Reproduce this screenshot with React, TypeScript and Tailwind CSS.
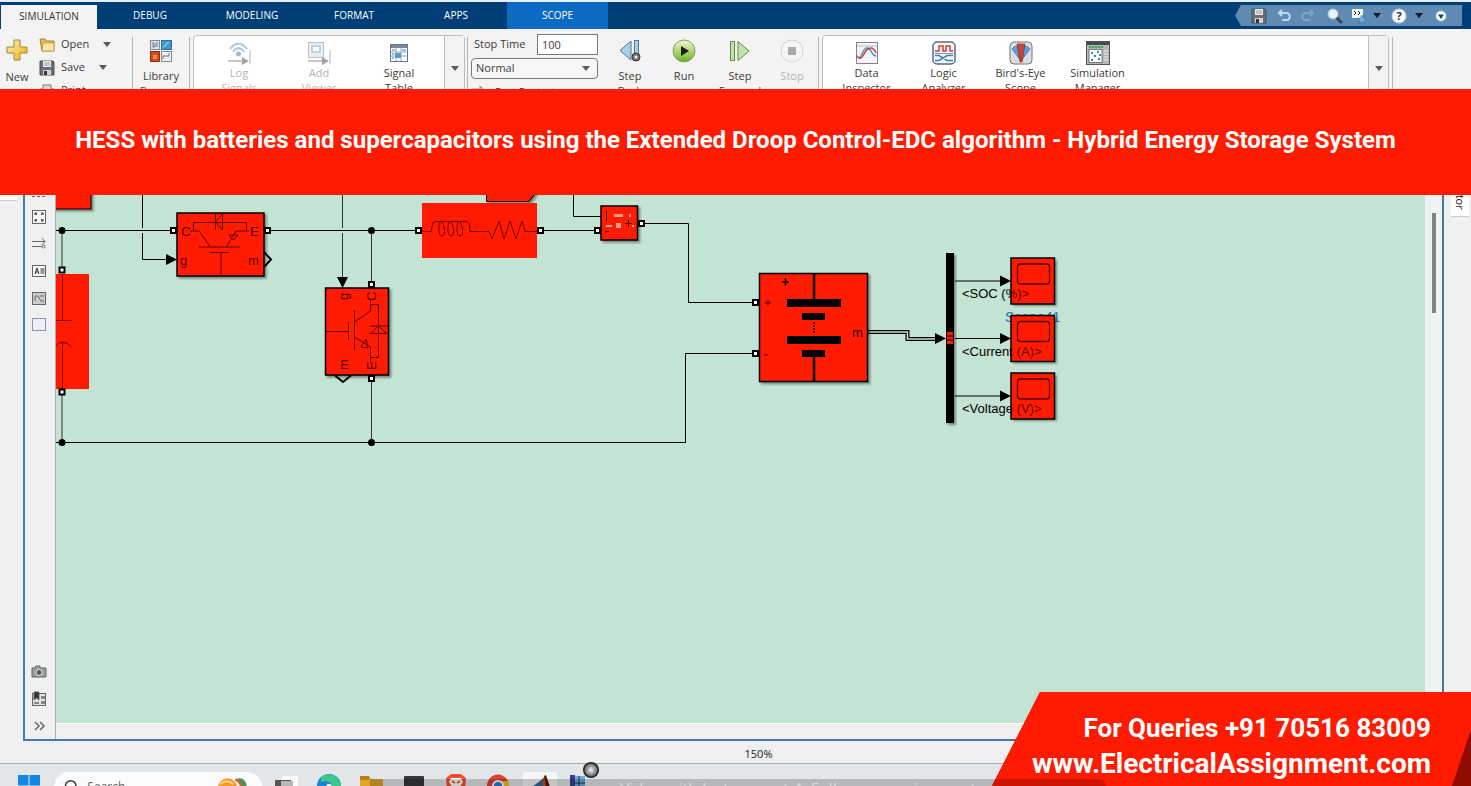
import type { ReactNode } from "react";

const RED = "#ff1a00";
const CANVAS = "#c3e3d3";

const tabs = ["SIMULATION", "DEBUG", "MODELING", "FORMAT", "APPS", "SCOPE"];

function Caret({ className = "" }: { className?: string }) {
  return (
    <svg width="8" height="5" viewBox="0 0 8 5" className={className}>
      <path d="M0 0h8L4 5z" fill="currentColor" />
    </svg>
  );
}

function Disk({ size = 16 }: { size?: number }) {
  return (
    <svg width={size} height={size} viewBox="0 0 16 16">
      <path d="M1 1h13l1 1v13H1z" fill="#6b6e72" stroke="#4a4d51" />
      <rect x="4" y="1" width="8" height="6" fill="#e8eaec" />
      <path d="M5 3h6M5 5h6" stroke="#9aa0a6" />
      <rect x="4" y="10" width="8" height="5" fill="#cfd2d6" />
      <rect x="5" y="11" width="3" height="4" fill="#33363a" />
    </svg>
  );
}

function PlusIcon() {
  return (
    <svg width="22" height="22" viewBox="0 0 22 22">
      <defs>
        <linearGradient id="gold" x1="0" y1="0" x2="1" y2="1">
          <stop offset="0" stopColor="#fff6b0" />
          <stop offset="1" stopColor="#e6ab1c" />
        </linearGradient>
      </defs>
      <path d="M8 1h6v7h7v6h-7v7H8v-7H1V8h7z" fill="url(#gold)" stroke="#a8862c" />
    </svg>
  );
}

function FolderIcon() {
  return (
    <svg width="16" height="14" viewBox="0 0 16 14">
      <path d="M1 1h5l1 2h8v10H3z" fill="#e2b862" stroke="#a98236" />
      <path d="M4 5h11v8H3z" fill="#fbe6a6" stroke="#b8924a" strokeWidth=".7" />
    </svg>
  );
}

function LibraryIcon() {
  return (
    <svg width="22" height="22" viewBox="0 0 22 22">
      <rect x=".5" y=".5" width="9" height="9" fill="#dfe3e8" stroke="#868c94" />
      <path d="M3 2v5h2V3m2-1v5" stroke="#6d757f" fill="none" />
      <rect x="11.500" y=".5" width="10" height="9" fill="#3d97d3" stroke="#2b6fa3" />
      <path d="M13 7c3 0 3-5 6-5" stroke="#bfe3f7" fill="none" />
      <rect x=".5" y="11.500" width="9" height="10" fill="#d4481c" stroke="#92310f" />
      <rect x="3" y="15" width="4" height="4" fill="#f08a5c" />
      <rect x="11.500" y="11.500" width="10" height="10" fill="#eceef0" stroke="#868c94" />
      <path d="M13 19v-3h6v-3" stroke="#6d757f" fill="none" />
    </svg>
  );
}

function LogIcon() {
  return (
    <svg width="24" height="24" viewBox="0 0 24 24" fill="none">
      <path d="M3 8c5-7 12-7 17 0M6 11c3-5 8-5 11 0" stroke="#a9cbe0" strokeWidth="2" />
      <circle cx="11.500" cy="13" r="2.500" fill="#9db9cb" />
      <path d="M1 20h16" stroke="#b5b5b5" strokeWidth="1.500" />
      <path d="M15 16l7 4-7 4z" fill="#a3a3a3" />
      <path d="M23 9v14" stroke="#b5b5b5" />
    </svg>
  );
}

function ViewerIcon() {
  return (
    <svg width="24" height="24" viewBox="0 0 24 24" fill="none">
      <rect x="1.500" y="1.500" width="15" height="15" fill="#e9eff3" stroke="#b7c2ca" />
      <rect x="5" y="5" width="8" height="6" fill="#fff" stroke="#a9cbe0" strokeWidth="1.500" />
      <path d="M1 20h16" stroke="#b5b5b5" strokeWidth="1.500" />
      <path d="M15 16l7 4-7 4z" fill="#a3a3a3" />
      <path d="M23 9v14" stroke="#b5b5b5" />
    </svg>
  );
}

function TableIcon() {
  return (
    <svg width="18" height="18" viewBox="0 0 18 18">
      <rect x=".5" y=".5" width="17" height="17" fill="#fff" stroke="#6b7480" />
      <rect x="1" y="1" width="16" height="3" fill="#7d8894" />
      <path d="M1 8h16M1 12h16M6 4v13M11 4v13" stroke="#9aa5b1" />
      <rect x="5" y="9" width="6" height="5" fill="#4f9be0" />
      <path d="M2 6h3M2 10h2M2 14h2M12 6h4" stroke="#3e7fc0" />
    </svg>
  );
}

function StepBackIcon() {
  return (
    <svg width="24" height="24" viewBox="0 0 24 24">
      <path d="M13 2v19L2 11.500z" fill="#a9d0ea" stroke="#4f7896" />
      <rect x="16.500" y="1.500" width="4" height="20" fill="#a9d0ea" stroke="#4f7896" />
      <circle cx="18" cy="18" r="4" fill="#777" stroke="#333" />
      <circle cx="18" cy="18" r="1.500" fill="#eee" />
    </svg>
  );
}

function RunIcon() {
  return (
    <svg width="24" height="24" viewBox="0 0 24 24">
      <defs>
        <linearGradient id="run" x1="0" y1="0" x2="0" y2="1">
          <stop offset="0" stopColor="#f0f8d4" />
          <stop offset="1" stopColor="#6fb01c" />
        </linearGradient>
      </defs>
      <circle cx="12" cy="12" r="11" fill="url(#run)" stroke="#86a35a" />
      <path d="M9 7l8 5-8 5z" fill="#1d1d1d" />
    </svg>
  );
}

function StepForwardIcon() {
  return (
    <svg width="22" height="24" viewBox="0 0 22 24">
      <rect x="1.500" y="2.500" width="4" height="19" fill="#bfe3a8" stroke="#5d8f4a" />
      <path d="M9 2.500v19L20 12z" fill="#bfe3a8" stroke="#5d8f4a" />
    </svg>
  );
}

function StopIcon() {
  return (
    <svg width="24" height="24" viewBox="0 0 24 24">
      <circle cx="12" cy="12" r="11" fill="#f4f4f4" stroke="#d3d3d3" />
      <rect x="8" y="8" width="8" height="8" fill="#a9a9a9" />
    </svg>
  );
}

function DataIcon() {
  return (
    <svg width="22" height="22" viewBox="0 0 22 22" fill="none">
      <rect x=".5" y=".5" width="21" height="21" fill="#f5f5f5" stroke="#7f858b" />
      <path d="M1 4h20" stroke="#b9bec3" />
      <path d="M2 16c5 0 4-10 9-10s4 8 9 8" stroke="#4d93cf" strokeWidth="1.500" />
      <path d="M1 14c3 4 5 2 7-2s4-6 7-6 4 3 5 5" stroke="#c3443b" strokeWidth="1.500" />
    </svg>
  );
}

function LogicIcon() {
  return (
    <svg width="24" height="24" viewBox="0 0 24 24" fill="none">
      <rect x="1" y="1" width="22" height="22" rx="4" fill="#f3f5f7" stroke="#5c6b86" strokeWidth="1.500" />
      <path d="M3 10h4V5h4v5h3V5h4v5h3" stroke="#c3443b" strokeWidth="1.500" />
      <path d="M3 12.500h18" stroke="#8494aa" />
      <path d="M3 14.500h4l8 5h6M3 19.500h4l8-5h6" stroke="#3c7fc0" strokeWidth="1.500" />
    </svg>
  );
}

function BirdIcon() {
  return (
    <svg width="24" height="24" viewBox="0 0 24 24">
      <rect x="1" y="1" width="22" height="22" rx="4" fill="#dcdfe2" stroke="#70767c" />
      <path d="M3 8c2-3 4-3 6-3l3 15zM21 8c-2-3-4-3-6-3l-3 15z" fill="#5aa2dc" stroke="#3c70a0" strokeWidth=".7" />
      <path d="M8 3h8l-3 18h-2z" fill="#c7453a" stroke="#8e2b22" strokeWidth=".7" />
    </svg>
  );
}

function ManagerIcon() {
  return (
    <svg width="24" height="24" viewBox="0 0 24 24">
      <rect x=".5" y=".5" width="23" height="23" fill="#b4b8bb" stroke="#555" />
      <rect x="1" y="1" width="22" height="3" fill="#444a50" />
      <path d="M3 6h14" stroke="#2fa04a" strokeWidth="2" strokeDasharray="2 1" />
      <rect x="3" y="8.500" width="13" height="13" fill="#fff" stroke="#777" />
      <path d="M5 11h2v2H5zM11 10h2v2h-2zM8 14h2v2H8zM12 17h2v2h-2zM5 18h2v2H5zM13 13h2v2h-2z" fill="#3183cf" />
      <path d="M18 10h4M18 13h4M18 16h4M18 19h4" stroke="#f0f0f0" />
    </svg>
  );
}

function ToolButton({
  icon,
  lines,
  width,
  gap = "gap-0",
  disabled = false,
}: {
  icon: ReactNode;
  lines: string[];
  width: string;
  gap?: string;
  disabled?: boolean;
}) {
  return (
    <button
      disabled={disabled}
      className={`flex shrink-0 flex-col items-center text-[11px] leading-[15px] ${width} ${gap} ${
        disabled ? "text-[#b4b4b4]" : "text-[#3c3c3c]"
      }`}
    >
      <span className="flex h-6 items-center">{icon}</span>
      <span className="flex flex-col">
        {lines.map((line) => (
          <span key={line}>{line}</span>
        ))}
      </span>
    </button>
  );
}

function Divider() {
  return <div className="mt-2 w-px shrink-0 bg-[#b5b7b9]" />;
}

function QuickAccess() {
  return (
    <div className="mt-[3px] mr-[9px] ml-auto flex h-[21px] w-[227px] items-center bg-[#5f8ab2] pl-4 text-[#0c1c30] [clip-path:polygon(6px_0,100%_0,100%_100%,6px_100%,0_50%)]">
      <button aria-label="Save" className="w-[26px]">
        <Disk />
      </button>
      <button aria-label="Undo" className="w-6">
        <svg width="14" height="14" viewBox="0 0 14 14" fill="none" stroke="#b9dcf3" strokeWidth="2">
          <path d="M5 1L2 4l3 3M2 4h7c5 0 5 7 0 7H5" />
        </svg>
      </button>
      <button aria-label="Redo" className="w-[26px]">
        <svg width="14" height="14" viewBox="0 0 14 14" fill="none" stroke="#7ba6c9" strokeWidth="2">
          <path d="M9 1l3 3-3 3M12 4H5c-5 0-5 7 0 7h4" />
        </svg>
      </button>
      <button aria-label="Find" className="w-6">
        <svg width="16" height="16" viewBox="0 0 16 16">
          <path d="M9 9l6 6" stroke="#33475c" strokeWidth="3" />
          <circle cx="6" cy="6" r="5" fill="#e9f4fb" stroke="#a8c5da" />
        </svg>
      </button>
      <button aria-label="Favorites" className="flex w-10 items-center gap-1.5">
        <svg width="16" height="16" viewBox="0 0 16 16">
          <rect x="1" y="1" width="11" height="9" fill="#f2f2f2" />
          <path d="M3 3l2 2-2 2M7 3l2 2-2 2" fill="none" stroke="#222" />
          <path d="M11 7l1.500 3 3 .4-2 2 .5 3-3-1.400-3 1.400.6-3-2-2 3-.4z" fill="#6fb0e0" stroke="#2c6a9c" strokeWidth=".6" />
        </svg>
        <Caret />
      </button>
      <button aria-label="Help" className="flex w-11 items-center gap-2">
        <svg width="16" height="16" viewBox="0 0 16 16">
          <circle cx="8" cy="8" r="7" fill="#f4f6f8" stroke="#c5d3df" />
          <text x="8" y="12" textAnchor="middle" fontSize="11" fontWeight="700" fill="#27323d">?</text>
        </svg>
        <Caret />
      </button>
      <button aria-label="Minimize toolstrip">
        <svg width="12" height="12" viewBox="0 0 12 12">
          <circle cx="6" cy="6" r="5" fill="#fff" stroke="#a7d2ee" />
          <path d="M3 4.500h6L6 9z" fill="#123f6b" />
        </svg>
      </button>
    </div>
  );
}

function Toolstrip() {
  return (
    <div className="flex h-[91px] shrink-0 overflow-hidden bg-[#f3f3f3]">
      <div className="flex w-[132px] shrink-0 text-[11px] text-[#3c3c3c]">
        <button className="mt-2.5 flex w-[34px] flex-col items-center leading-[15px]">
          <span className="flex h-[30px] items-start">
            <PlusIcon />
          </span>
          New
        </button>
        <div className="mt-1 ml-[5px] flex flex-col">
          <button className="flex h-[23px] items-center gap-1.5">
            <FolderIcon /> Open <Caret className="ml-2 text-[#5a5a5a]" />
          </button>
          <button className="flex h-[23px] items-center gap-1.5">
            <Disk /> Save <Caret className="ml-2 text-[#5a5a5a]" />
          </button>
          <button className="flex h-[23px] items-center gap-1.5">
            <svg width="16" height="14" viewBox="0 0 16 14">
              <path d="M4 1h8v4h3v6H1V5h3z" fill="#d9d9d9" stroke="#777" />
            </svg>
            Print
          </button>
        </div>
      </div>
      <Divider />
      <div className="mt-2.5 flex shrink-0">
        <ToolButton width="w-14" gap="gap-[5px]" icon={<LibraryIcon />} lines={["Library", "Browser"]} />
      </div>
      <Divider />
      <div className="mt-1.5 ml-[3px] flex w-[272px] shrink-0 rounded-t border border-[#bcbec0] bg-white">
        <div className="flex flex-1 pt-[5px] pl-[5px]">
          <ToolButton width="w-20" disabled icon={<LogIcon />} lines={["Log", "Signals"]} />
          <ToolButton width="w-20" disabled icon={<ViewerIcon />} lines={["Add", "Viewer"]} />
          <ToolButton width="w-20" icon={<TableIcon />} lines={["Signal", "Table"]} />
        </div>
        <button aria-label="More prepare tools" className="flex w-5 justify-center border-l border-[#bcbec0] bg-[#f3f3f3] pt-[30px] text-[#5a5a5a]">
          <Caret />
        </button>
      </div>
      <div className="ml-0.5 flex">
        <Divider />
      </div>
      <div className="mt-[5px] ml-[3px] w-[127px] shrink-0 text-[11px] text-[#3c3c3c]">
        <div className="flex items-center justify-between">
          <label htmlFor="stop-time" className="ml-[3px]">Stop Time</label>
          <input id="stop-time" defaultValue="100" className="h-[21px] w-[61px] border border-[#77797b] bg-white px-1" />
        </div>
        <div className="relative mt-[3px]">
          <select aria-label="Simulation mode" className="h-[21px] w-full appearance-none rounded border border-[#77797b] bg-[#f7f7f7] px-1">
            <option>Normal</option>
          </select>
          <Caret className="pointer-events-none absolute top-2 right-2 text-[#5a5a5a]" />
        </div>
        <button className="mt-1 flex items-center gap-2 leading-[17px]">
          <svg width="16" height="12" viewBox="0 0 16 12">
            <path d="M1 3h8V0l6 6-6 6V9H1z" fill="#c9c9e0" stroke="#8885a5" />
          </svg>
          Fast Restart
        </button>
      </div>
      <div className="mt-2.5 ml-1 flex w-[216px] shrink-0 gap-1">
        <ToolButton width="w-[56px]" gap="gap-[5px]" icon={<StepBackIcon />} lines={["Step", "Back"]} />
        <ToolButton width="w-[44px]" gap="gap-[5px]" icon={<RunIcon />} lines={["Run"]} />
        <ToolButton width="w-[60px]" gap="gap-[5px]" icon={<StepForwardIcon />} lines={["Step", "Forward"]} />
        <ToolButton width="w-[36px]" gap="gap-[5px]" disabled icon={<StopIcon />} lines={["Stop"]} />
      </div>
      <Divider />
      <div className="mt-1.5 mr-[3px] ml-[3px] flex w-[567px] shrink-0 rounded-t border border-[#bcbec0] bg-white">
        <div className="flex flex-1 pt-[5px] pl-[5px]">
          <ToolButton width="w-[77px]" icon={<DataIcon />} lines={["Data", "Inspector"]} />
          <ToolButton width="w-[77px]" icon={<LogicIcon />} lines={["Logic", "Analyzer"]} />
          <ToolButton width="w-[77px]" icon={<BirdIcon />} lines={["Bird's-Eye", "Scope"]} />
          <ToolButton width="w-[77px]" icon={<ManagerIcon />} lines={["Simulation", "Manager"]} />
        </div>
        <button aria-label="More review tools" className="flex w-5 justify-center border-l border-[#bcbec0] bg-[#f3f3f3] pt-[30px] text-[#5a5a5a]">
          <Caret />
        </button>
      </div>
      <Divider />
    </div>
  );
}

function PaletteButton({ label, children }: { label: string; children: ReactNode }) {
  return (
    <button aria-label={label} className="size-4 shrink-0">
      <svg width="16" height="16" viewBox="0 0 16 16" fill="none" stroke="#666">
        {children}
      </svg>
    </button>
  );
}

function Palette() {
  return (
    <div className="flex w-[31px] shrink-0 flex-col items-center gap-[11px] border-r border-[#a9adb0] bg-[#eef0f1] pt-1.5 pr-0.5 pb-[5px]">
      <PaletteButton label="Hide browser">
        <rect x="1.500" y="2.500" width="13" height="11" />
      </PaletteButton>
      <PaletteButton label="Back">
        <path d="M14 8H3M7 4L3 8l4 4" />
      </PaletteButton>
      <PaletteButton label="Zoom">
        <path d="M1 14.500h14" strokeDasharray="3 2" />
      </PaletteButton>
      <PaletteButton label="Fit to view">
        <rect x="1.500" y="1.500" width="13" height="13" fill="#f7f7f7" />
        <path d="M4 6V4h2M10 4h2v2M12 10v2h-2M6 12H4v-2M4 4l2 2M12 4l-2 2M12 12l-2-2M4 12l2-2" stroke="#333" />
      </PaletteButton>
      <PaletteButton label="Port values">
        <path d="M1 5.500h13M11 2.500l3 3-3 3M1 10.500h10" />
        <circle cx="12.500" cy="10.500" r="1.500" />
      </PaletteButton>
      <PaletteButton label="Annotation">
        <rect x="1.500" y="2.500" width="13" height="11" fill="#f7f7f7" />
        <path d="M4 11l2-6 2 6M4.500 9h3M9.500 6h4M9.500 8h4M9.500 10h4" stroke="#333" />
      </PaletteButton>
      <PaletteButton label="Image">
        <rect x="1.500" y="2.500" width="13" height="12" fill="#c9cbcd" />
        <path d="M4 11V6h3l3 5h3M9 6h4" />
      </PaletteButton>
      <PaletteButton label="Area">
        <rect x="1.500" y="1.500" width="13" height="12" fill="#eceefa" stroke="#8f93a5" />
      </PaletteButton>
      <div className="flex-1" />
      <PaletteButton label="Screenshot">
        <path d="M1 4h3l1-2h4v2h6v9H1z" fill="#9a9da0" />
        <circle cx="8" cy="8.500" r="3" fill="#555" stroke="#eee" />
      </PaletteButton>
      <PaletteButton label="Model data">
        <rect x="1.500" y="2.500" width="13" height="12" fill="#e3e4e5" />
        <path d="M3 1h5v8L5.500 7 3 9z" fill="#333" />
        <path d="M10 5h4v3h-4zM10 10h4v3h-4zM3 11h5v2H3z" fill="#888" stroke="none" />
      </PaletteButton>
      <PaletteButton label="More">
        <path d="M4 4l4 4-4 4M9 4l4 4-4 4" strokeWidth="1.500" />
      </PaletteButton>
    </div>
  );
}

function Port({ x, y }: { x: number; y: number }) {
  return <rect x={x - 2.5} y={y - 2.5} width="5" height="5" fill="#fff" stroke="#000" strokeWidth="2" />;
}

function Dot({ x, y }: { x: number; y: number }) {
  return <circle cx={x} cy={y} r="3.500" fill="#000" />;
}

function ScopeBlock({ y, label }: { y: number; label: string }) {
  return (
    <g>
      <path d={`M955 ${y}H1002`} stroke="#000" />
      <path d={`M1000 ${y - 5.5}L1011 ${y}L1000 ${y + 5.5}z`} fill="#000" />
      <text x="962" y={y + 17}>{label}</text>
      <rect x="1011" y={y - 23} width="43.500" height="46" fill={RED} fillOpacity=".35" stroke="#000" strokeWidth="1.500" />
      <rect x="1017.500" y={y - 17} width="32" height="20" rx="3" fill="none" stroke="#500" strokeWidth="1.300" />
    </g>
  );
}

function Diagram() {
  return (
    <svg width="100%" height="100%" className="block" fontFamily="Liberation Sans, Arial, sans-serif" fontSize="13">
      <defs>
        <filter id="shadow" x="-20%" y="-20%" width="150%" height="150%">
          <feDropShadow dx="2" dy="2" stdDeviation="1" floodColor="#000" floodOpacity=".4" />
        </filter>
      </defs>
      {/* model coordinates start at the corner of the visible canvas */}
      <g transform="translate(-56 -122)">
        <g fill="none" stroke="#000">
          <path d="M56 230.500H173M267 230.500H418M540 230.500H598" />
          <path d="M56 442.500H685.500V353.500H756" />
          <path d="M62 230V270M62 392V442M371.500 230V285M371.500 378V442" stroke="#333" />
          <path d="M342.500 120V228M342.500 233V278" stroke="#333" />
          <path d="M142.500 120V228M142.500 233V259.500H168" />
          <path d="M573.500 120V216.500H601M641 223.500H688.500V302.500H756" />
          <path d="M868 332H907.500V339H937" strokeWidth="4" />
          <path d="M868 332H907.500V339H937" stroke={CANVAS} strokeWidth="1.500" />
        </g>
        <path d="M166 254v11l11-5.500zM337 277h11l-5.500 11zM935 333v11l11-5.500z" fill="#000" />
        <Dot x={62} y={230.5} />
        <Dot x={371.5} y={230.5} />
        <Dot x={62} y={442.5} />
        <Dot x={371.5} y={442.5} />

        {/* blocks cut by the banner */}
        <rect x="30" y="130" width="61" height="79" fill={RED} stroke="#000" filter="url(#shadow)" />
        <path d="M486.500 150V201.500H529L535 194V150z" fill={RED} stroke="#000" filter="url(#shadow)" />

        {/* capacitor */}
        <rect x="40" y="274" width="49" height="115" fill={RED} />
        <path d="M62.500 274V320.500M56 320.500H71.500M56 346Q58 342 62.500 342T71.500 347M62.500 342V389" fill="none" stroke="#700" />
        <Port x={62} y={270} />
        <Port x={62} y={392} />

        {/* upper IGBT */}
        <rect x="177" y="213" width="87" height="63" fill={RED} stroke="#000" strokeWidth="1.500" filter="url(#shadow)" />
        <path
          d="M190 231H199L210 246.500M199 247H240M210 252.500H229M221 253V276M227 246L236 231H249M193.500 231V222.500H246.500V231M215.500 213V230M215.500 222L222.500 214V230zM229 235L238 235L233 240z"
          fill="none"
          stroke="#600"
        />
        <g fill="#500">
          <text x="181" y="236">C</text>
          <text x="250" y="236">E</text>
          <text x="180" y="265">g</text>
          <text x="248" y="265">m</text>
        </g>
        <path d="M264 252L271 259.500L264 267" fill="none" stroke="#000" strokeWidth="2" />
        <Port x={173.5} y={230.5} />
        <Port x={267.5} y={230.5} />

        {/* lower IGBT */}
        <rect x="325.500" y="288" width="63" height="87" fill={RED} stroke="#000" strokeWidth="1.500" filter="url(#shadow)" />
        <path
          d="M370.500 300V311L354.500 322M354.500 310V350M348.500 322V340M326 331.500H348.500M354.500 337L370.500 347V363M371 304.500H378.500V357.500H371M370 326H388M378.500 326L370.500 333.500H387zM361 347L366 339L368 348z"
          fill="none"
          stroke="#600"
        />
        <g fill="#500">
          <text transform="translate(348 300) rotate(-90)">g</text>
          <text transform="translate(376 301) rotate(-90)">C</text>
          <text transform="translate(348 370) rotate(-90)">m</text>
          <text transform="translate(376 370) rotate(-90)">E</text>
        </g>
        <path d="M335 375.500L343 382L351 375.500" fill="none" stroke="#000" strokeWidth="2" />
        <Port x={371.5} y={284.5} />
        <Port x={371.5} y={378.5} />

        {/* series RL branch */}
        <rect x="422" y="203" width="115" height="55" fill={RED} />
        <path
          d="M422 231.500H431L433 222.500Q436 221 441 221.500H466Q470 221 470 231.500H489L492 239L499 221L504 239L510 221L516 239L522 221L525 231.500H537M440 222C438 229 439 236 442 236S446 229 442 222M449 222C447 229 448 236 451 236S455 229 451 222M458 222C456 229 457 236 460 236S464 229 460 222"
          fill="none"
          stroke="#700"
        />
        <Port x={418.5} y={230.5} />
        <Port x={540.5} y={230.5} />

        {/* current measurement */}
        <rect x="601" y="206" width="36.500" height="34" fill={RED} stroke="#000" strokeWidth="1.500" filter="url(#shadow)" />
        <path d="M614 214h9v3h-9zM606 225h6v2h-6zM616 223h5v5h-5zM629 214h2v3h-2zM632 225h2v2h-2z" fill="#ff9f90" />
        <path d="M606.500 211V221M605 231.500h4M625 223.500h7M628.500 220v7" stroke="#400" />
        <Port x={597.5} y={230.5} />
        <Port x={641.5} y={223.5} />

        {/* battery */}
        <rect x="759.500" y="273.500" width="108" height="108" fill={RED} stroke="#000" strokeWidth="1.500" filter="url(#shadow)" />
        <path d="M787 299h54v8h-54zM802 313h23v7h-23zM787 336h54v8h-54zM802 350h23v7h-23z" fill="#000" />
        <path d="M814 274V300M814 356V381" stroke="#000" strokeWidth="2.500" />
        <path d="M814 322V334" stroke="#000" strokeWidth="1.500" strokeDasharray="2 1" />
        <path d="M782 282h7M785.500 278.500v7" stroke="#000" strokeWidth="1.500" />
        <path d="M765 303h6M768 300v6M764 355h4" stroke="#400" />
        <text x="852" y="337" fill="#300">m</text>
        <Port x={755.5} y={302.5} />
        <Port x={755.5} y={353.5} />

        {/* bus selector */}
        <rect x="946" y="253" width="8" height="170" fill="#000" filter="url(#shadow)" />
        <path d="M947 332h6v12h-6z" fill={RED} />
        <path d="M947 336h6M947 340h6" stroke="#000" />
        <text x="1005" y="322" fontSize="14" fill="#1f74bd">Scope41</text>
        <path d="M1011 258h44v46h-44zM1011 315.500h44v46h-44zM1011 373h44v46h-44z" fill={RED} filter="url(#shadow)" />
        <ScopeBlock y={281} label="<SOC (%)>" />
        <ScopeBlock y={338.5} label="<Current (A)>" />
        <ScopeBlock y={396} label="<Voltage (V)>" />
      </g>
    </svg>
  );
}

function Editor() {
  return (
    <div className="flex min-h-0 flex-1 bg-[#f0f0ef]">
      <div className="h-[81px] w-[23px] shrink-0 pr-1.5">
        <div className="h-full border-b border-[#c8cacc] bg-white" />
      </div>
      <div className="flex min-w-0 flex-1 border-2 border-[#4778a6]">
        <Palette />
        <div className="flex min-w-0 flex-1 flex-col">
          <div className="min-h-0 flex-1 overflow-hidden bg-[#c3e3d3]">
            <Diagram />
          </div>
          <div className="h-4 shrink-0 border-t border-white bg-[#efefef]" />
        </div>
        <div className="w-[17px] shrink-0 bg-[#f1f2f4] pt-[91px] pl-[7px]">
          <div className="h-[100px] w-1 bg-[#808284]" />
        </div>
      </div>
      <div className="w-[27px] shrink-0 pl-[7px]">
        <button className="flex h-[97px] w-[18px] flex-col items-center justify-end border-b border-[#c8cacc] bg-white pb-1.5 text-[11px] leading-4 text-[#222]">
          <span className="whitespace-nowrap [writing-mode:vertical-rl]">Property Inspector</span>
        </button>
      </div>
    </div>
  );
}

function Taskbar() {
  return (
    <div className="flex h-[23px] shrink-0 items-start overflow-hidden border-t border-[#a9adaf] bg-[#e3e6e9] pl-[18px]">
      <button aria-label="Start" className="mt-[11px] mr-3.5 shrink-0">
        <svg width="22" height="22" viewBox="0 0 22 22" fill="#1687e0">
          <path d="M0 0h10.500v10.500H0zM11.500 0H22v10.500H11.500zM0 11.500h10.500V22H0zM11.500 11.500H22V22H11.500z" />
        </svg>
      </button>
      <label className="mt-2 flex h-[30px] w-[208px] shrink-0 items-center rounded-full bg-[#fafbfc] pr-3 pl-2.5">
        <svg width="16" height="16" viewBox="0 0 16 16" fill="none" stroke="#333" strokeWidth="1.500">
          <circle cx="7" cy="7" r="5.500" />
          <path d="M11 11l4 4" />
        </svg>
        <input aria-label="Search" placeholder="Search" className="ml-2 w-[130px] bg-transparent text-xs placeholder:text-[#666]" />
        <svg width="34" height="26" viewBox="0 0 34 26">
          <circle cx="11" cy="14" r="10" fill="#ee9a2c" />
          <path d="M3 10q8-6 14 0" stroke="#fbd27a" strokeWidth="2" fill="none" />
          <path d="M19 5q10-4 12 7l-4 8q-2-10-8-15z" fill="#4c9253" />
          <path d="M19 5q6 3 8 13" stroke="#e45b31" strokeWidth="2" fill="none" />
        </svg>
      </label>
      <div className="mt-2 flex shrink-0 items-start">
        <svg width="51" height="30" viewBox="0 0 51 30">
          <rect x="20" y="4" width="16" height="14" fill="#fafafa" />
          <rect x="13" y="8" width="16" height="16" fill="#555" />
          <rect x="19" y="9" width="12" height="12" fill="#b5b7b9" />
        </svg>
        <svg width="44" height="30" viewBox="0 0 44 30">
          <circle cx="16" cy="14" r="12" fill="#1b84d6" />
          <path d="M8 5c9-6 20 0 20 10h-9c0-5-5-7-11-5z" fill="#3cc78c" />
          <circle cx="16" cy="15" r="3" fill="#fff" />
        </svg>
        <svg width="44" height="30" viewBox="0 0 44 30">
          <path d="M3 4h9l2 3h12v19H3z" fill="#dfa42a" />
          <path d="M3 4h9v4H3z" fill="#b97d12" />
        </svg>
        <svg width="40" height="30" viewBox="0 0 40 30">
          <rect x="3" y="4" width="20" height="20" rx="1" fill="#35373a" />
        </svg>
        <svg width="44" height="30" viewBox="0 0 44 30">
          <path d="M10 2h10l5 4-1 12-9 8-9-8L5 6z" fill="#f0512a" />
          <path d="M10 6h10l2 4-4 6h-6l-4-6z" fill="#fff" />
          <path d="M11 9l3 2M19 9l-3 2" stroke="#f0512a" strokeWidth="2" />
        </svg>
        <svg width="38" height="30" viewBox="0 0 38 30">
          <circle cx="13" cy="14" r="11" fill="#f2bd2b" />
          <path d="M2 14a11 11 0 0 1 21-5H13l-6 8z" fill="#db4335" />
          <circle cx="13" cy="14" r="5" fill="#2c78dc" stroke="#fff" strokeWidth="2" />
        </svg>
        <svg width="44" height="30" viewBox="0 0 44 30">
          <rect x="0" y="-6" width="34" height="36" fill="#f5f6f7" />
          <path d="M6 17l10-7 6-6 6 18z" fill="#c9551d" />
          <path d="M6 17l10-7 4-3v12z" fill="#2b6a9b" />
          <path d="M21 4l2-1 6 18-6-6z" fill="#5a1c10" />
        </svg>
        <svg width="40" height="30" viewBox="0 0 40 30">
          <path d="M3 3h5v22H3z" fill="#32418c" />
          <path d="M8 4h10v20H8z" fill="#74a9d8" />
          <path d="M12 4v20M8 11h10" stroke="#1c2c60" />
        </svg>
      </div>
    </div>
  );
}

export default function App() {
  return (
    <div className="relative flex h-screen flex-col overflow-hidden bg-[#eef0f0] [font-family:'Open_Sans','Noto_Sans',sans-serif]">
      <div className="flex h-[29px] shrink-0 border-t-2 border-[#e6eff6] bg-[#003e78]">
        {tabs.map((tab, i) => (
          <button
            key={tab}
            className={`text-[10px] ${
              i === 0
                ? "mt-[3px] mr-0.5 ml-px w-24 bg-[#f3f3f3] pb-[2px] text-[#333]"
                : i === tabs.length - 1
                  ? "w-[101px] bg-[#0b6bc2] text-white"
                  : "w-[102px] text-white"
            }`}
          >
            {tab}
          </button>
        ))}
        <QuickAccess />
      </div>
      <Toolstrip />
      <Editor />
      <div className="flex h-[22px] shrink-0 items-center justify-center pt-1 pl-[46px] text-[11px] leading-4 text-[#222]">
        150%
      </div>
      <Taskbar />

      <svg className="pointer-events-none absolute bottom-1 left-[582px] size-4 overflow-visible" viewBox="0 0 16 16">
        <defs>
          <radialGradient id="knob">
            <stop offset="0" stopColor="#f5f5f5" />
            <stop offset=".7" stopColor="#777" />
            <stop offset=".9" stopColor="#1b1b1b" />
          </radialGradient>
        </defs>
        <circle cx="9" cy="11" r="8" fill="url(#knob)" transform="translate(0 -7)" />
      </svg>

      <div className="absolute inset-x-0 top-[89px] flex h-[106px] items-center justify-center bg-[#ff1a00] px-4 pb-1">
        <h1 className="text-center text-2xl leading-[30px] font-bold whitespace-nowrap text-white [font-family:Roboto,sans-serif]">
          HESS with batteries and supercapacitors using the Extended Droop Control-EDC algorithm - Hybrid Energy Storage System
        </h1>
      </div>

      <div className="absolute right-0 bottom-0 h-[94px] w-[479px] bg-[#8f0d00] [clip-path:polygon(48px_0,100%_0,100%_100%,0_100%)]">
        <div className="flex h-full flex-col items-end justify-end bg-[#ff1a00] pr-10 pb-1 text-[28px] leading-9 font-bold whitespace-nowrap text-white [clip-path:polygon(0_0,100%_0,100%_40%,460px_100%,0_100%)] [font-family:Roboto,sans-serif]">
          <p className="text-[26px] leading-9">For Queries +91 70516 83009</p>
          <a href="#">www.ElectricalAssignment.com</a>
        </div>
      </div>

      <div className="pointer-events-none absolute bottom-0 left-[370px] h-[7px] w-1/2 overflow-hidden rounded-tr-lg bg-black/20 pl-[250px] text-base leading-5 whitespace-nowrap text-white/50">
        Video with lecture part 4. Follow my assignments
      </div>
    </div>
  );
}
